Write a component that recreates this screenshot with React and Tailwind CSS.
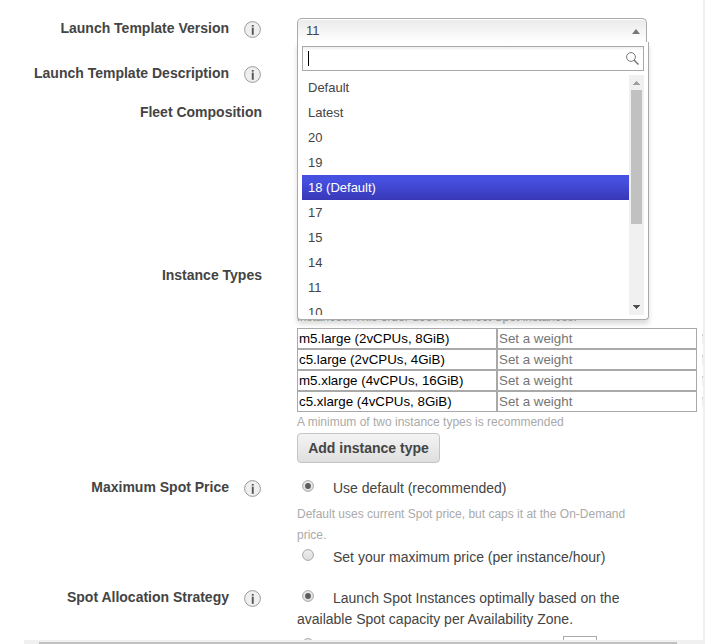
import React from 'react';

const versions = ['Default', 'Latest', '20', '19', '18 (Default)', '17', '15', '14', '11', '10'];

const instances = [
  'm5.large (2vCPUs, 8GiB)',
  'c5.large (2vCPUs, 4GiB)',
  'm5.xlarge (4vCPUs, 16GiB)',
  'c5.xlarge (4vCPUs, 8GiB)',
];

function InfoIcon() {
  return (
    <svg width="18" height="18" viewBox="0 0 18 18" className="mt-[3px] ml-[15px] shrink-0">
      <circle cx="8.5" cy="8.5" r="7.9" fill="#efefef" stroke="#999" strokeWidth="1" />
      <rect x="7.8" y="4" width="1.9" height="1.6" fill="#555" />
      <rect x="7.8" y="6.6" width="1.9" height="7.2" fill="#555" />
    </svg>
  );
}

function Row({ label, info, height, children }) {
  return (
    <div className={`flex shrink-0 ${height}`}>
      <div className="flex w-[262px] shrink-0 items-start justify-end text-[14px] leading-5 font-bold whitespace-nowrap">
        <span>{label}</span>
        {info && <InfoIcon />}
      </div>
      <div className="ml-[35px] w-[400px] shrink-0">{children}</div>
    </div>
  );
}

function Radio({ checked }) {
  return (
    <svg width="12" height="12" viewBox="0 0 12 12" className="mr-[19px] ml-[5px] inline-block align-[1px]">
      <defs>
        <linearGradient id="radioFace" x1="0" y1="0" x2="0" y2="1">
          <stop offset="0" stopColor="#eee" />
          <stop offset="1" stopColor="#dcdcdc" />
        </linearGradient>
      </defs>
      <circle cx="6" cy="6" r="5.4" fill="url(#radioFace)" stroke="#a8a8a8" strokeWidth="1" />
      {checked && <circle cx="6" cy="6" r="2.9" fill="#5c5c5c" />}
    </svg>
  );
}

function VersionSelect() {
  return (
    <div className="relative z-10 w-[352px]">
      <div className="flex h-6 w-[350px] items-center justify-between rounded-t-[5px] border border-b-0 border-[#aaa] bg-linear-to-b from-[#eaeaea] to-white pr-1.5 pl-2 text-[13px] shadow-[inset_0_1px_0_#fff]">
        <span>11</span>
        <svg width="8" height="5" viewBox="0 0 8 5" className="mt-px">
          <path d="M4 0L8 5H0Z" fill="#777" />
        </svg>
      </div>
      <div className="absolute top-6 left-0 h-[278px] w-[352px] rounded-b-[4px] border border-t-0 border-[#aaa] bg-white px-1 pt-1 shadow-[0_4px_5px_rgba(0,0,0,0.15)]">
        <div className="flex h-[25px] items-center justify-between border border-[#aaa] bg-linear-to-b from-[#eee] to-white to-15% pr-1 pl-[5px]">
          <span className="h-[15px] w-px bg-black" />
          <svg width="13" height="13" viewBox="0 0 13 13" fill="none" stroke="#777">
            <circle cx="5" cy="5" r="4.4" strokeWidth="1" />
            <path d="M8 8L12.5 12.5" strokeWidth="1.5" />
          </svg>
        </div>
        <div className="mt-1 flex h-60">
          <div className="flex-1 overflow-hidden text-[13px] leading-[25px]">
            {versions.map((v, i) => (
              <div
                key={v}
                className={`h-[25px] pl-1.5 ${i === 4 ? 'bg-linear-to-b from-[#4650e0] from-20% to-[#3838b8] text-white' : ''}`}
              >
                {v}
              </div>
            ))}
          </div>
          <div className="flex w-[15px] flex-col items-center bg-[#f0f0f0]">
            <svg width="15" height="15" viewBox="0 0 15 15" shapeRendering="crispEdges">
              <path d="M7.5 6L11.5 10H3.5Z" fill="#a0a0a0" />
            </svg>
            <div className="h-[134px] w-[11px] bg-[#c1c1c1]" />
            <svg width="15" height="15" viewBox="0 0 15 15" className="mt-auto" shapeRendering="crispEdges">
              <path d="M3.5 5H11.5L7.5 9Z" fill="#505050" />
            </svg>
          </div>
        </div>
      </div>
    </div>
  );
}

function InstanceTable() {
  return (
    <div>
      {instances.map((name) => (
        <div key={name} className="flex h-[21px] w-[410px] text-[13.33px] leading-[19px] whitespace-nowrap">
          <div className="w-[200px] border border-[#a9a9a9] pl-px text-black">{name}</div>
          <div className="w-[200px] border border-[#a9a9a9] pl-px text-[#757575]">Set a weight</div>
          <div className="mt-1.5 ml-[5px] h-2.5 w-px border-t-2 border-[#ccc] bg-[#eee]" />
        </div>
      ))}
    </div>
  );
}

export default function App() {
  return (
    <div className="flex h-[644px] w-[705px] flex-col overflow-hidden bg-white font-['Liberation_Sans',Arial,sans-serif] text-[#444]">
      <div className="flex h-[640px] justify-between">
        <div className="flex w-[703px] flex-col overflow-hidden pt-[18px]">
          <Row label="Launch Template Version" info height="h-[45px]">
            <VersionSelect />
          </Row>
          <Row label="Launch Template Description" info height="h-[39px]" />
          <Row label="Fleet Composition" height="h-[163px]" />
          <Row label="Instance Types" height="h-[212px]">
            <p className="pt-[42px] text-[12px] leading-[21px] tracking-[0.03px] whitespace-nowrap text-[#aaa]">
              instances. This order does not affect Spot instances.
            </p>
            <InstanceTable />
            <p className="text-[12px] leading-[21px] text-[#aaa]">A minimum of two instance types is recommended</p>
            <button className="block h-[30px] w-[143px] rounded-[4px] border border-[#c4c4c4] bg-linear-to-b from-[#f4f4f4] to-[#dfdfdf] text-[14px] leading-7 font-bold whitespace-nowrap">
              Add instance type
            </button>
          </Row>
          <Row label="Maximum Spot Price" info height="h-[110px]">
            <p className="pt-px text-[14px] leading-[21px] whitespace-nowrap"><Radio checked />Use default (recommended)</p>
            <p className="mt-[5px] w-[340px] text-[12px] leading-[21px] text-[#aaa]">
              Default uses current Spot price, but caps it at the On-Demand price.
            </p>
            <p className="mt-px text-[14px] leading-[21px] whitespace-nowrap"><Radio />Set your maximum price (per instance/hour)</p>
          </Row>
          <Row label="Spot Allocation Strategy" info height="h-[80px]">
            <p className="w-[340px] pt-px text-[14px] leading-[21px]">
              <Radio checked />Launch Spot Instances optimally based on the available Spot capacity per Availability Zone.
            </p>
            <div className="mt-[6px] flex items-start">
              <div className="mt-0.5 flex"><Radio /></div>
              <div className="ml-[230px] h-5 w-[34px] border border-[#a9a9a9]" />
            </div>
          </Row>
        </div>
        <div className="w-0.5 bg-[#f0f0f0]" />
      </div>
      <div className="ml-6 h-1 bg-[#f0f0f0] pt-0.5 pl-[15px]">
        <div className="h-0.5 w-[638px] bg-[#c1c1c1]" />
      </div>
    </div>
  );
}
